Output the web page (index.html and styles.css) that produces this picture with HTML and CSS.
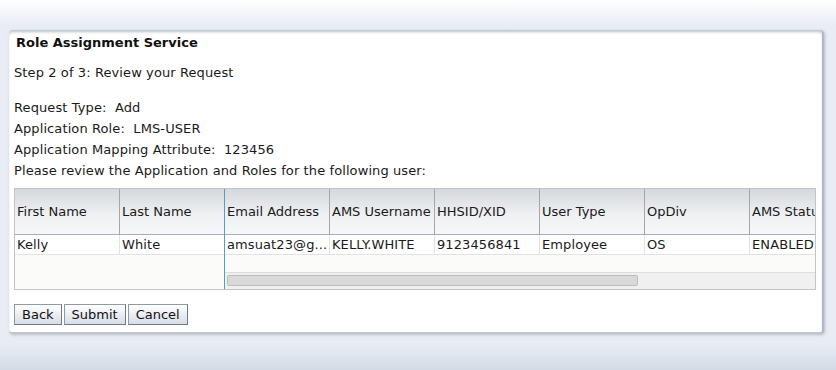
FILE: index.html
```html
<!DOCTYPE html>
<html lang="en">
<head>
    <meta charset="UTF-8">
    <meta name="viewport" content="width=device-width, initial-scale=1.0">
    <title>Role Assignment Service</title>
    <link rel="stylesheet" href="styles.css">
</head>
<body>
    <div class="page">
        <div class="panel">
            <h1 class="title">Role Assignment Service</h1>
            <p class="step">Step 2 of 3: Review your Request</p>

            <div class="info">
                <p>Request Type:&nbsp; Add</p>
                <p>Application Role:&nbsp; LMS-USER</p>
                <p>Application Mapping Attribute:&nbsp; 123456</p>
                <p>Please review the Application and Roles for the following user:</p>
            </div>

            <div class="grid">
                <!-- frozen columns -->
                <div class="frozen">
                    <div class="head-row">
                        <div class="cell">First Name</div>
                        <div class="cell">Last Name</div>
                    </div>
                    <div class="data-row">
                        <div class="cell">Kelly</div>
                        <div class="cell">White</div>
                    </div>
                    <div class="filler"></div>
                    <div class="filler-bar"></div>
                </div>
                <!-- scrolling columns -->
                <div class="scroller">
                    <div class="scroll-view">
                        <div class="head-row">
                            <div class="cell">Email Address</div>
                            <div class="cell">AMS Username</div>
                            <div class="cell">HHSID/XID</div>
                            <div class="cell">User Type</div>
                            <div class="cell">OpDiv</div>
                            <div class="cell">AMS Status</div>
                        </div>
                        <div class="data-row">
                            <div class="cell">amsuat23@g...</div>
                            <div class="cell">KELLY.WHITE</div>
                            <div class="cell">9123456841</div>
                            <div class="cell">Employee</div>
                            <div class="cell">OS</div>
                            <div class="cell">ENABLED</div>
                        </div>
                    </div>
                    <div class="filler"></div>
                    <div class="hscroll">
                        <div class="thumb"></div>
                    </div>
                </div>
            </div>

            <div class="buttons">
                <button class="btn">Back</button>
                <button class="btn">Submit</button>
                <button class="btn">Cancel</button>
            </div>
        </div>
    </div>
</body>
</html>
```

FILE: styles.css
```css
*{
    margin: 0;
    padding: 0;
    box-sizing: border-box;
}
html,body{
    height: 100%;
}
body{
    font-family: "DejaVu Sans", Verdana, sans-serif;
    font-size: 13px;
    letter-spacing: .1px;
    color: #1a1a1a;
    background: linear-gradient(#ffffff 0px, #e9ecf4 26px, #e9ecf4 344px, #d3dbe6 370px);
}
.page{
    padding: 30px 12px 0 9px;
}
.panel{
    width: 815px;
    height: 304px;
    background-color: #fff;
    border-radius: 4px;
    border-right: 2px solid #b4b8c0;
    border-bottom: 2px solid #c2c6cc;
    box-shadow: 1px 1px 3px rgba(120, 130, 145, .45), inset 0 3px 3px -1px #b9c1cd;
    padding: 4px 0 0 5px;
}
.title{
    font-size: 13px;
    font-weight: bold;
    letter-spacing: 0;
    line-height: 16px;
    padding: 1px 0 0 2px;
    color: #111;
}
.step{
    line-height: 20px;
    margin-top: 12px;
}
.info{
    margin-top: 14px;
}
.info p{
    line-height: 21px;
}
.grid{
    display: flex;
    width: 802px;
    height: 102px;
    margin-top: 7px;
    border: 1px solid #c4c4c4;
    background-color: #fbfbf9;
}
.frozen{
    width: 210px;
    flex-shrink: 0;
    border-right: 1px solid #4ea1c6;
    display: flex;
    flex-direction: column;
}
.scroller{
    flex: 1;
    overflow: hidden;
    display: flex;
    flex-direction: column;
}
.scroll-view{
    width: 630px;
}
.head-row,
.data-row{
    display: flex;
}
.head-row{
    height: 46px;
    background: linear-gradient(#d5d8dc, #eef0f2 55%, #f6f7f8);
    border-bottom: 1px solid #a9acb0;
    letter-spacing: 0;
}
.head-row .cell{
    border-right: 1px solid #a3a6aa;
}
.data-row{
    height: 20px;
    background-color: #fff;
    border-bottom: 1px solid #e2e2e2;
}
.data-row .cell{
    border-right: 1px solid #e2e2e2;
}
.cell{
    width: 105px;
    flex-shrink: 0;
    padding-left: 2px;
    display: flex;
    align-items: center;
    white-space: nowrap;
    overflow: hidden;
}
.frozen .cell:last-child{
    border-right: none;
}
.filler{
    flex: 1;
}
.filler-bar{
    height: 16px;
}
.hscroll{
    height: 17px;
    background-color: #f0f0f0;
    border-top: 1px solid #dedede;
    padding: 2px 0 0 2px;
}
.thumb{
    width: 411px;
    height: 11px;
    background-color: #d9d9d9;
    border: 1px solid #bdbdbd;
    border-radius: 2px;
}
.buttons{
    display: flex;
    gap: 2px;
    margin-top: 14px;
}
.btn{
    font-family: "DejaVu Sans", Verdana, sans-serif;
    font-size: 13px;
    color: #111;
    height: 21px;
    padding: 0 7px;
    background: linear-gradient(#ffffff, #e6eaf0 60%, #d8dee8);
    border: 1px solid #8e9aa8;
    border-right-color: #6e7a88;
    border-bottom-color: #6e7a88;
}
```
